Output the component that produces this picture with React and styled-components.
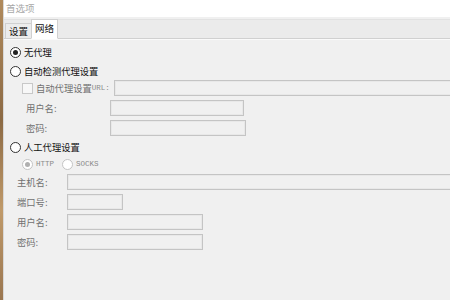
import styled, { createGlobalStyle } from "styled-components"

const Global = createGlobalStyle`
    html, body {
        margin:0;
        padding:0;
        width:450px;
        height:300px;
        overflow:hidden;
        background:#f0f0f0;
        font-family: "Noto Sans CJK SC", "Liberation Sans", sans-serif;
    }
`

const Page = styled.div`
    display:flex;
    width:450px;
    height:300px;
`

const Strip = styled.div`
    width:3px;
    background: linear-gradient(180deg, #b08a5c, #8c6a44 40%, #c09a6a 70%, #9a7650);
`

const Window = styled.div`
    flex:1;
    display:flex;
    flex-direction:column;
    background:#f0f0f0;
    border-left:1px solid #d8d8d8;
`

const TitleBar = styled.div`
    height:17px;
    background:#fff;
    color:#a8a8a8;
    font-size:9.5px;
    line-height:16px;
    padding-left:2px;
`

const TabBar = styled.div`
    height:18px;
    margin-top:2px;
    display:flex;
    align-items:flex-end;
    background:#ebebeb;
    border-bottom:1px solid #d0d0d0;
    border-top:1px solid #e2e2e2;
    padding-left:1px;
`

const Tab = styled.div`
    height:${p => p.active ? 18 : 14}px;
    padding:0 3px;
    font-size:9.5px;
    line-height:${p => p.active ? 17 : 14}px;
    color:#111;
    background:${p => p.active ? "#fff" : "#ececec"};
    border:1px solid #d0d0d0;
    border-bottom:${p => p.active ? "1px solid #fff" : "none"};
    margin-bottom:${p => p.active ? -1 : 0}px;
    margin-left:${p => p.active ? -1 : 0}px;
`

const Content = styled.div`
    display:flex;
    flex-direction:column;
    padding-top:4px;
    border-top:1px solid #fafafa;
`

const Row = styled.div`
    height:16px;
    margin-top:${p => p.mt || 0}px;
    display:flex;
    align-items:center;
    padding-left:${p => p.indent}px;
`

const Radio = styled.span`
    box-sizing:border-box;
    width:11px;
    height:11px;
    border-radius:50%;
    border:1px solid ${p => p.disabled ? "#c4c4c4" : "#333"};
    background:#fff;
    display:flex;
    align-items:center;
    justify-content:center;
    margin-right:3px;
    &::after {
        content:"";
        display:${p => p.checked ? "block" : "none"};
        width:5px;
        height:5px;
        border-radius:50%;
        background:${p => p.disabled ? "#b0b0b0" : "#222"};
    }
`

const Check = styled.span`
    box-sizing:border-box;
    width:11px;
    height:11px;
    border:1px solid #c8c8c8;
    background:#f7f7f7;
    margin-right:3px;
`

const Label = styled.span`
    font-size:9.3px;
    color:${p => p.dim ? "#707070" : "#111"};
    width:${p => p.w ? p.w + "px" : "auto"};
    white-space:nowrap;
`

const Mono = styled.span`
    font-family:"Liberation Mono", monospace;
    font-size:7.5px;
    color:#8a8a8a;
    margin-right:${p => p.mr || 0}px;
`

const Field = styled.div`
    box-sizing:border-box;
    height:16px;
    width:${p => p.w}px;
    flex:${p => p.grow ? "1" : "none"};
    margin-right:${p => p.grow ? -4 : 0}px;
    border:1px solid #c4c4c4;
    box-shadow: inset 0 0 0 1px #e8e8e8;
    background:#f0f0f0;
`

export default () => {
    return (
        <Page>
            <Global/>
            <Strip/>
            <Window>
                <TitleBar>首选项</TitleBar>
                <TabBar>
                    <Tab>设置</Tab>
                    <Tab active>网络</Tab>
                </TabBar>
                <Content>
                    <Row indent={6}>
                        <Radio checked/>
                        <Label>无代理</Label>
                    </Row>
                    <Row mt={3} indent={6}>
                        <Radio/>
                        <Label>自动检测代理设置</Label>
                    </Row>
                    <Row mt={1} indent={18}>
                        <Check/>
                        <Label dim>自动代理设置</Label>
                        <Mono mr={4}>URL:</Mono>
                        <Field grow/>
                    </Row>
                    <Row mt={4} indent={22}>
                        <Label dim w={84}>用户名:</Label>
                        <Field w={134}/>
                    </Row>
                    <Row mt={4} indent={22}>
                        <Label dim w={84}>密码:</Label>
                        <Field w={136}/>
                    </Row>
                    <Row mt={3} indent={6}>
                        <Radio/>
                        <Label>人工代理设置</Label>
                    </Row>
                    <Row mt={1} indent={18}>
                        <Radio checked disabled/>
                        <Mono mr={8}>HTTP</Mono>
                        <Radio disabled/>
                        <Mono>SOCKS</Mono>
                    </Row>
                    <Row mt={2} indent={13}>
                        <Label dim w={50}>主机名:</Label>
                        <Field grow/>
                    </Row>
                    <Row mt={4} indent={13}>
                        <Label dim w={50}>端口号:</Label>
                        <Field w={56}/>
                    </Row>
                    <Row mt={4} indent={13}>
                        <Label dim w={50}>用户名:</Label>
                        <Field w={136}/>
                    </Row>
                    <Row mt={4} indent={13}>
                        <Label dim w={50}>密码:</Label>
                        <Field w={136}/>
                    </Row>
                </Content>
            </Window>
        </Page>
    )
}
